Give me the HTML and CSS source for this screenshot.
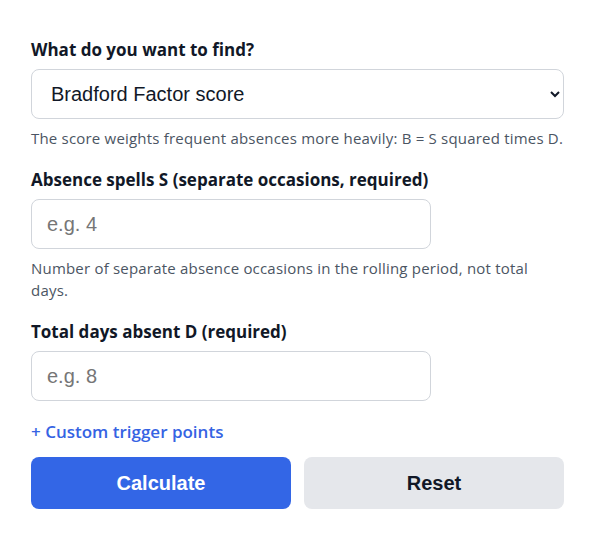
FILE: index.html
```html
<!DOCTYPE html>
<html lang="en">
<head>
    <meta charset="UTF-8">
    <meta name="viewport" content="width=device-width, initial-scale=1.0">
    <title>Bradford Factor Calculator</title>
    <link rel="stylesheet" href="styles.css">
</head>
<body>

    <form class="calculator" onsubmit="return false;">
        <div class="field">
            <label for="mode">What do you want to find?</label>
            <select id="mode">
                <option>Bradford Factor score</option>
                <option>Spells S</option>
                <option>Days absent D</option>
            </select>
            <p class="hint">The score weights frequent absences more heavily: B = S squared times D.</p>
        </div>

        <div class="field">
            <label for="spells">Absence spells S (separate occasions, required)</label>
            <input type="text" id="spells" class="short" placeholder="e.g. 4">
            <p class="hint">Number of separate absence occasions in the rolling period, not total days.</p>
        </div>

        <div class="field">
            <label for="days">Total days absent D (required)</label>
            <input type="text" id="days" class="short" placeholder="e.g. 8">
        </div>

        <a href="#" class="toggle">+ Custom trigger points</a>

        <div class="actions">
            <button class="calc">Calculate</button>
            <button class="reset" type="reset">Reset</button>
        </div>
    </form>

</body>
</html>
```

FILE: styles.css
```css
* {
    box-sizing: border-box;
    margin: 0;
    padding: 0;
}

body {
    background: #ffffff;
    font-family: "Open Sans", "Noto Sans", Arial, sans-serif;
    color: #111827;
}

.calculator {
    width: 533px;
    margin: 39px 0 0 31px;
}

.field {
    margin-bottom: 20px;
}

label {
    display: block;
    font-size: 17px;
    font-weight: 700;
    line-height: 22px;
    margin-bottom: 8px;
}

select,
input {
    display: block;
    width: 100%;
    height: 50px;
    font-family: "Liberation Sans", Arial, sans-serif;
    font-size: 20px;
    color: #111827;
    background: #fff;
    border: 1px solid #d1d5db;
    border-radius: 8px;
    padding: 0 15px;
}

input.short {
    width: 400px;
}

input::placeholder {
    color: #767676;
}

.hint {
    font-size: 15px;
    letter-spacing: 0.2px;
    line-height: 22px;
    color: #4b5563;
    margin-top: 8px;
}

.toggle {
    display: inline-block;
    font-size: 17px;
    font-weight: 600;
    line-height: 22px;
    color: #3563e3;
    text-decoration: none;
}

.actions {
    display: grid;
    grid-template-columns: 1fr 1fr;
    gap: 13px;
    margin-top: 14px;
}

button {
    height: 52px;
    border: none;
    border-radius: 8px;
    font-family: "Liberation Sans", Arial, sans-serif;
    font-size: 20px;
    font-weight: 700;
    cursor: pointer;
}

.calc {
    background: #3366e6;
    color: #fff;
}

.reset {
    background: #e5e7eb;
    color: #111827;
}
```
